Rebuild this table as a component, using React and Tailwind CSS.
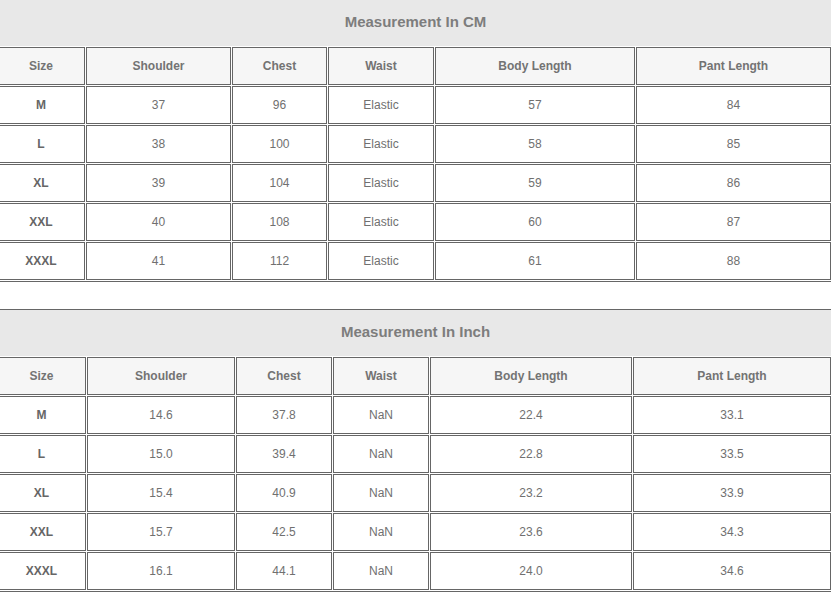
import React from 'react';

const headers = ['Size', 'Shoulder', 'Chest', 'Waist', 'Body Length', 'Pant Length'];

const cmRows = [
  ['M', '37', '96', 'Elastic', '57', '84'],
  ['L', '38', '100', 'Elastic', '58', '85'],
  ['XL', '39', '104', 'Elastic', '59', '86'],
  ['XXL', '40', '108', 'Elastic', '60', '87'],
  ['XXXL', '41', '112', 'Elastic', '61', '88'],
];

const inchRows = [
  ['M', '14.6', '37.8', 'NaN', '22.4', '33.1'],
  ['L', '15.0', '39.4', 'NaN', '22.8', '33.5'],
  ['XL', '15.4', '40.9', 'NaN', '23.2', '33.9'],
  ['XXL', '15.7', '42.5', 'NaN', '23.6', '34.3'],
  ['XXXL', '16.1', '44.1', 'NaN', '24.0', '34.6'],
];

function SizeTable({ title, rows, cols, className = '' }) {
  return (
    <div className={`border-b border-[#666] ${className}`}>
      <div className="h-[46px] bg-[#e8e8e8] flex items-center justify-center pb-[2px]">
        <span className="text-[15px] font-bold text-[#7d7d7d]">{title}</span>
      </div>
      <div className={`grid ${cols} gap-px py-px -ml-[3px]`}>
        {headers.map((h) => (
          <div
            key={h}
            className="h-[38px] border border-[#666] bg-[#f6f6f6] flex items-center justify-center text-[12px] font-bold text-[#737373]"
          >
            {h}
          </div>
        ))}
        {rows.map((row) =>
          row.map((cell, i) => (
            <div
              key={row[0] + i}
              className={`h-[38px] border border-[#666] bg-white flex items-center justify-center text-[12px] ${
                i === 0 ? 'font-bold text-[#666]' : 'text-[#707070]'
              }`}
            >
              {cell}
            </div>
          ))
        )}
      </div>
    </div>
  );
}

export default function App() {
  return (
    <div className="w-[831px] h-[594px] overflow-hidden bg-white font-['Liberation_Sans',Arial,sans-serif]">
      <SizeTable
        title="Measurement In CM"
        rows={cmRows}
        cols="grid-cols-[88px_145px_95px_106px_200px_195px]"
      />
      <SizeTable
        title="Measurement In Inch"
        rows={inchRows}
        cols="grid-cols-[89px_148px_96px_96px_202px_198px]"
        className="mt-[27px] border-t"
      />
    </div>
  );
}
